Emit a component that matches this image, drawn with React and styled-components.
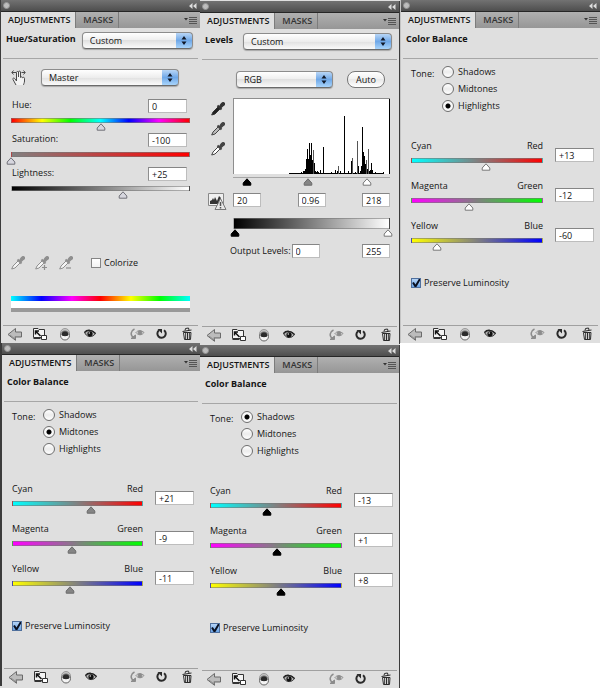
import React, { useId, useState } from 'react';
import styled, { createGlobalStyle } from 'styled-components';

const GlobalStyle = createGlobalStyle`
    *, *::before, *::after {
        box-sizing: border-box;
    }

    body {
        margin: 0;
        background: #ffffff;
        color: #141414;
        font-family: "Open Sans", "Lucida Grande", sans-serif;
        font-size: 9px;
        font-weight: 500;
        line-height: 12px;
    }

    button, input, select {
        margin: 0;
        color: inherit;
        font: inherit;
    }
`;

const svgUrl = (svg) => `url("data:image/svg+xml,${encodeURIComponent(svg)}")`;

const arrows = svgUrl(
    '<svg xmlns="http://www.w3.org/2000/svg" width="16" height="17"><path d="M8 4l2.5 3.5h-5zM8 13l2.5-3.5h-5z" fill="#101828"/></svg>'
);

const tick = svgUrl(
    '<svg xmlns="http://www.w3.org/2000/svg" width="12" height="12"><path d="M3 5.500l2.500 4L10.500 1" fill="none" stroke="#0a1020" stroke-width="2"/></svg>'
);

const thumbImage = (fill, stroke) => svgUrl(
    `<svg xmlns="http://www.w3.org/2000/svg" width="10" height="8"><path d="M5 .8L8.800 5v2.200H1.200V5z" fill="${fill}" stroke="${stroke}" stroke-linejoin="round"/></svg>`
);

const thumbs = {
    black: thumbImage('#000', '#000'),
    gray: thumbImage('#858585', '#6c6c6c'),
    light: thumbImage('#d6d6de', '#707078'),
    white: thumbImage('#fff', '#777'),
};

const Board = styled.main`
    display: flex;
    align-items: stretch;
`;

const Column = styled.div`
    flex: 1 1 0;
    min-width: 0;
    display: flex;
    flex-direction: column;
    gap: ${(p) => p.$gap || '0'};
    padding-top: ${(p) => p.$gap || '0'};
    background: ${(p) => p.$background || '#dfdfdf'};
`;

const Panel = styled.section`
    display: flex;
    flex-direction: column;
    background: #dfdfdf;
    border-left: ${(p) => p.$left || 'none'};
    border-right: ${(p) => p.$right || 'none'};
`;

const TitleBar = styled.div`
    display: flex;
    align-items: center;
    justify-content: space-between;
    height: 12px;
    padding: 0 3px 0 2px;
    background: linear-gradient(#727272, #4e4e4e);
    border-bottom: 1px solid #262626;
`;

const PlainButton = styled.button`
    display: flex;
    padding: 0;
    background: none;
    border: none;
`;

const TabBar = styled.div`
    display: flex;
    height: 16px;
    padding-right: 3px;
    background: linear-gradient(#b0b0b0, #969696);
`;

const Tab = styled.button`
    padding: 0 5px 0 7px;
    color: ${(p) => (p.$active ? '#141414' : '#333333')};
    font-weight: 600;
    background: ${(p) => (p.$active ? '#dfdfdf' : 'transparent')};
    border: none;
    border-right: 1px solid #7c7c7c;
`;

const MenuButton = styled(PlainButton)`
    align-items: center;
    margin-left: auto;
`;

const Header = styled.header`
    display: flex;
    align-items: center;
    gap: 6px;
    height: 31px;
    margin: 0 2px;
    padding: 4px 5px 9px 3px;
    border-bottom: 1px solid #a6a6a6;
`;

const Title = styled.h2`
    min-width: 32px;
    margin: 0;
    padding-bottom: 4px;
    font-size: 9px;
    font-weight: 700;
    white-space: nowrap;
`;

const Content = styled.div`
    display: flex;
    flex-direction: column;
    min-height: 266px;
    padding: ${(p) => p.$padding};
`;

const Select = styled.select`
    flex: ${(p) => (p.$width ? 'none' : '1')};
    width: ${(p) => p.$width || 'auto'};
    min-width: 0;
    height: 17px;
    padding: 0 20px 0 7px;
    appearance: none;
    background:
        ${arrows} right center / 16px 17px no-repeat,
        linear-gradient(#b9d6f6, #6fa8e8 50%, #a8d4fb) right / 16px 100% no-repeat,
        linear-gradient(#ffffff, #ededed 50%, #e0e0e0 50%, #fafafa);
    border: 1px solid #8c8c8c;
    border-bottom-color: #6a6a6a;
    border-radius: 4px;
    box-shadow: 0 1px 1px rgba(0, 0, 0, 0.25);
`;

const AutoButton = styled.button`
    width: 38px;
    height: 17px;
    padding: 0;
    background: linear-gradient(#ffffff, #f0f0f0 50%, #e9e9e9 50%, #ffffff);
    border: 1px solid #777777;
    border-radius: 8px;
`;

const ToolRow = styled.div`
    display: flex;
    align-items: center;
    gap: 14px;
    padding-right: 11px;
`;

const Field = styled.input`
    width: ${(p) => p.$width || '39px'};
    height: 14px;
    padding: 0 3px;
    background: #ffffff;
    border: 1px solid #bdbdbd;
    border-top-color: #858585;
    border-left-color: #8e8e8e;
    border-radius: 0;
`;

const Bar = styled.div`
    height: ${(p) => p.$height || '5px'};
    background: ${(p) => p.$fill};
    border: 1px solid rgba(120, 120, 120, 0.6);
`;

const Range = styled.input`
    display: block;
    grid-area: 1 / 1;
    width: 100%;
    height: 8px;
    appearance: none;
    background: none;
    pointer-events: none;

    &::-webkit-slider-thumb {
        width: 10px;
        height: 8px;
        appearance: none;
        background: ${(p) => thumbs[p.$thumb]};
        pointer-events: auto;
    }
`;

// Half a thumb wider on each side, so the tip reaches both ends of the bar
const Rail = styled.div`
    display: grid;
    margin: 0 -5px;
`;

const HueSliders = styled.div`
    display: flex;
    flex-direction: column;
    gap: 2px;
    margin: 13px 0 57px;
`;

const LabelLine = styled.div`
    display: flex;
    justify-content: space-between;
    padding: 0 3px 0 1px;
    margin-bottom: 5px;
`;

const CheckLine = styled.label`
    display: flex;
    align-items: center;
    gap: 3px;
`;

const CheckBox = styled.input`
    width: 10px;
    height: 10px;
    appearance: none;
    background: linear-gradient(#ffffff, #f2f2f2);
    border: 1px solid #858585;

    &:checked {
        background: ${tick} center no-repeat, linear-gradient(#b5d4f7, #6aa5e8);
        border-color: #4f6f9c;
    }
`;

const Droppers = styled.div`
    display: flex;
    align-items: center;
    gap: 10px;

    ${CheckLine} {
        margin-left: 8px;
    }
`;

const Spectrum = styled.div`
    height: 16px;
    margin-top: 26px;
    background: #ffffff;
    border-bottom: 4px solid #999999;

    &::before {
        content: "";
        display: block;
        height: 5px;
        background: linear-gradient(90deg, #00ffff, #0000ff 17%, #ff00ff 34%, #ff0000 50%, #ffff00 67%, #00ff00 83%, #00ffff);
    }
`;

const LevelsTop = styled.div`
    display: flex;
    justify-content: space-between;
    padding: 0 5px 0 28px;
    margin-bottom: 10px;
`;

const LevelsGrid = styled.div`
    display: grid;
    grid-template-columns: 19px minmax(0, 1fr);
    column-gap: 6px;
`;

const DropperColumn = styled.div`
    display: flex;
    flex-direction: column;
    align-items: center;
    gap: 6px;
    padding-top: 4px;
`;

const Histogram = styled.svg`
    display: block;
    width: 100%;
    height: 76px;
    margin-bottom: 3px;
    background: #ffffff;
    border-top: 1px solid #8e8e8e;
    border-left: 1px solid #8e8e8e;
`;

const InputLevels = styled.div`
    border-top: 1px solid #a6a6a6;
`;

const FieldRow = styled.div`
    display: flex;
    justify-content: space-between;
    align-items: flex-start;
    margin: ${(p) => p.$margin || '0'};
`;

const OutputRow = styled.div`
    display: flex;
    align-items: center;
    gap: 1px;
    margin-top: 7px;
    padding-left: 22px;

    ${Field}:last-child {
        margin-left: auto;
    }
`;

const ToneGroup = styled.div`
    display: grid;
    grid-template-columns: 31px 1fr;
    margin-bottom: 28px;
`;

const ToneLabel = styled.div`
    padding-top: 2px;
`;

const ToneList = styled.div`
    display: flex;
    flex-direction: column;
    gap: 5px;
`;

const RadioLine = styled.label`
    display: flex;
    align-items: center;
    gap: 4px;
`;

const Radio = styled.input`
    width: 12px;
    height: 12px;
    appearance: none;
    background: linear-gradient(#ffffff, #ececec 50%, #ffffff);
    border: 1px solid #6e6e6e;
    border-radius: 50%;

    &:checked {
        background: radial-gradient(circle, #000000 2px, transparent 3px), #f8f8f8;
    }
`;

const BalanceRow = styled.div`
    display: grid;
    grid-template-columns: minmax(0, 1fr) 39px;
    align-items: start;
    column-gap: 12px;
    margin-bottom: 9px;

    ${Field} {
        margin-top: 8px;
    }
`;

const BalanceEnds = styled.label`
    display: flex;
    justify-content: space-between;
    margin-bottom: 6px;
`;

const Preserve = styled(CheckLine)`
    margin-top: 17px;
`;

const Footer = styled.footer`
    display: flex;
    align-items: center;
    gap: 9px;
    height: 18px;
    margin: 0 2px;
    padding: 0 3px 2px 4px;
    border-top: 1px solid #a0a0a0;
`;

const FooterButton = styled(PlainButton)`
    margin-left: ${(p) => (p.$push ? 'auto' : '0')};
`;

const BackIcon = () => (
    <svg width="16" height="14" viewBox="0 0 16 14">
        <path d="M1 7.500L8.500 1.500V5H14.500V10H8.500V13.300Z" fill="#bcbcbc" stroke="#6b6b6b" strokeLinejoin="round" />
        <path d="M3 8l5 4V9.500h6" fill="none" stroke="#8c8c8c" />
    </svg>
);

const ExpandIcon = () => (
    <svg width="16" height="14" viewBox="0 0 16 14">
        <path d="M1.500 1.500H6l1 1h5.500v8h-11z" fill="#f4f4f4" stroke="#333" />
        <path d="M3.500 7.500V4H7M4 4.500l4.500 4.500" fill="none" stroke="#111" strokeWidth="1.500" />
        <path d="M9.500 8.500h5v4h-5z" fill="#fff" stroke="#333" />
        <path d="M1.500 11.500h7" stroke="#333" />
    </svg>
);

const ClipIcon = () => (
    <svg width="16" height="14" viewBox="0 0 16 14">
        <circle cx="8" cy="6" r="4.500" fill="#c4c4c4" stroke="#9a9a9a" />
        <circle cx="8" cy="8.500" r="4.500" fill="#f3f3f3" stroke="#666" />
        <path d="M4.500 8a3.500 3.800 0 0 1 7 0c-1 1.600-6 1.600-7 0z" fill="#2b2b2b" />
    </svg>
);

const EyeIcon = () => (
    <svg width="16" height="14" viewBox="0 0 16 14">
        <path d="M2.500 5.500C5 2.500 10 2.500 13.500 6.500C11 10.500 5.500 10.500 3.500 7Z" fill="#b5b5b5" stroke="#333" />
        <path d="M2.500 5.500C5 2.500 10 2.500 13.500 6.500" fill="none" stroke="#222" strokeWidth="1.500" />
        <circle cx="8" cy="6.800" r="2.600" fill="#111" />
        <circle cx="7.300" cy="6" r=".8" fill="#ddd" />
    </svg>
);

const PreviousIcon = () => (
    <svg width="16" height="14" viewBox="0 0 16 14" fill="none" stroke="#8c8c8c">
        <path d="M5.500 2C1.500 4 1 8 4.500 10.500" strokeWidth="1.500" />
        <path d="M2 11.500h4.500V8z" fill="#8c8c8c" />
        <path d="M7 5.500C9 3 12 3 15 5.500C13 8.500 9 8.500 7 5.500Z" />
        <circle cx="11" cy="5.500" r="1.800" fill="#8c8c8c" />
    </svg>
);

const ResetIcon = () => (
    <svg width="16" height="14" viewBox="0 0 16 14">
        <path d="M10 3.200A4.200 4.200 0 1 1 5 3.300" fill="none" stroke="#2a2a2a" strokeWidth="2" />
        <path d="M3.500 2H8v4.500z" fill="#2a2a2a" />
    </svg>
);

const TrashIcon = () => (
    <svg width="16" height="14" viewBox="0 0 16 14" fill="none" stroke="#2a2a2a">
        <path d="M3.500 4.500l9-1.500M6 3.500l.5-2 3-.5.500 2" />
        <path d="M4.500 5.500h7.500l-.5 7H5.500z" fill="#f2f2f2" />
        <path d="M6.700 6v6M8.500 6v6M10.300 6v6" />
    </svg>
);

const HandIcon = () => (
    <svg width="16" height="17" viewBox="0 0 16 17" fill="none" stroke="#4a4a4a">
        <path d="M5 16L2 10.500c-.8-1.500 1-1.800 1.800-.8L5.500 12V3.500c0-1.400 2-1.400 2 0V8V3c0-1.200 2-1.200 2 0v5.500c.3-1 2-.8 2 .3c.4-.8 2-.6 2 .5V12c0 2-1 3-1 4" fill="#f3f3f3" />
        <path d="M1 3.500h4M10.500 3.500h3.500M2.500 1.500L.8 3.500l1.700 2M12.500 1.500l1.700 2-1.700 2" />
    </svg>
);

const WarningIcon = () => (
    <svg width="19" height="18" viewBox="0 0 19 18">
        <path d="M.5.5h15v12h-15z" fill="#f0f0f0" stroke="#888" />
        <path d="M2 11V8l2-1 1-2 1 2 1-3 1 2 1 2 2-5 2 2v6z" fill="#333" />
        <path d="M12.500 5.500l5.500 11H7z" fill="#e6e6e6" stroke="#777" strokeLinejoin="round" />
        <path d="M12.500 9v4M12.500 14v1.500" stroke="#555" strokeWidth="1.500" />
    </svg>
);

function DropperIcon({ fill = '#f4f4f4', color = '#777', sign }) {
    return (
        <svg width="14" height="14" viewBox="0 0 14 14">
            <path d="M8 4L2 10l-1.300 3L4 12l6-6" fill={fill} stroke={color} />
            <path d="M6.500 3.500L10.500 7.500" stroke={color} strokeWidth="2" />
            <path d="M8.500 5L10 2.500Q11.500 0 13 1T11.500 4L9.500 6Z" fill={color} stroke={color} strokeWidth="1.500" />
            {sign && <path d={sign === 'plus' ? 'M7 11.500h5M9.500 9v5' : 'M7 12h5'} stroke={color} strokeWidth="1.200" />}
        </svg>
    );
}

const signed = (value) => (value > 0 ? `+${value}` : `${value}`);

// x, height and shade of each bin that stands above the base line
const bins = [
    [67, 2], [69, 3], [70, 3], [71, 5], [72, 15], [73, 25], [74, 15], [75, 31], [76, 19], [77, 31], [78, 14],
    [79, 24, '#555'], [80, 11], [81, 3], [82, 2], [83, 3], [84, 2], [86, 4], [89, 27], [97, 2], [101, 4], [103, 3],
    [104, 8, '#555'], [106, 3], [110, 58], [114, 3], [117, 13], [118, 16, '#555'], [121, 2],
    [123, 33, '#555'], [124, 8], [126, 3], [127, 8], [128, 47], [129, 22], [130, 18], [131, 10],
    [132, 14, '#555'], [133, 5], [134, 25, '#555'], [135, 3], [136, 4], [137, 11], [138, 4], [141, 2], [149, 2],
];

function AdjustmentPanel({ title, header, left, right, padding, children }) {
    return (
        <Panel $left={left} $right={right}>
            <TitleBar>
                <PlainButton aria-label="Close">
                    <svg width="7" height="7"><circle cx="3.500" cy="3.500" r="3" fill="#bdbdbd" stroke="#929292" /></svg>
                </PlainButton>
                <PlainButton aria-label="Collapse">
                    <svg width="8" height="6"><path d="M3.500 0v6L0 3zM7.500 0v6L4 3z" fill="#dcdcdc" /></svg>
                </PlainButton>
            </TitleBar>
            <TabBar>
                <Tab $active>ADJUSTMENTS</Tab>
                <Tab>MASKS</Tab>
                <MenuButton aria-label="Panel menu">
                    <svg width="13" height="8">
                        <path d="M0 2h4L2 4.500z" fill="#333" />
                        <path d="M5 1.500h8M5 3.500h8M5 5.500h8M5 7.500h8" stroke="#555" />
                    </svg>
                </MenuButton>
            </TabBar>
            <Header>
                <Title>{title}</Title>
                {header}
            </Header>
            <Content $padding={padding}>{children}</Content>
            <Footer>
                <FooterButton aria-label="Back to list"><BackIcon /></FooterButton>
                <FooterButton aria-label="Expanded view"><ExpandIcon /></FooterButton>
                <FooterButton aria-label="Clip to layer"><ClipIcon /></FooterButton>
                <FooterButton aria-label="Toggle visibility"><EyeIcon /></FooterButton>
                <FooterButton $push aria-label="View previous state"><PreviousIcon /></FooterButton>
                <FooterButton aria-label="Reset"><ResetIcon /></FooterButton>
                <FooterButton aria-label="Delete"><TrashIcon /></FooterButton>
            </Footer>
        </Panel>
    );
}

function HueSlider({ label, initial, limit, fill }) {
    const id = useId();
    const [value, setValue] = useState(initial);

    return (
        <div>
            <LabelLine>
                <label htmlFor={id}>{label}</label>
                <Field id={id} value={signed(value)} onChange={(e) => setValue(Number(e.target.value) || 0)} />
            </LabelLine>
            <Bar $fill={fill} />
            <Rail>
                <Range
                    type="range"
                    aria-label={label}
                    min={-limit}
                    max={limit}
                    value={value}
                    onChange={(e) => setValue(Number(e.target.value))}
                    $thumb="light"
                />
            </Rail>
        </div>
    );
}

function BalanceSlider({ from, to, initial, fill, thumb }) {
    const id = useId();
    const [value, setValue] = useState(initial);

    return (
        <BalanceRow>
            <div>
                <BalanceEnds htmlFor={id}>
                    <span>{from}</span>
                    <span>{to}</span>
                </BalanceEnds>
                <Bar $fill={fill} />
                <Rail>
                    <Range
                        type="range"
                        aria-label={`${from} to ${to}`}
                        min={-100}
                        max={100}
                        value={value}
                        onChange={(e) => setValue(Number(e.target.value))}
                        $thumb={thumb}
                    />
                </Rail>
            </div>
            <Field id={id} value={signed(value)} onChange={(e) => setValue(Number(e.target.value) || 0)} />
        </BalanceRow>
    );
}

function HuePanel() {
    return (
        <AdjustmentPanel
            title="Hue/Saturation"
            header={<Select aria-label="Preset"><option>Custom</option></Select>}
            left="1px solid #3c3c3c"
            padding="10px 10px 0"
        >
            <ToolRow>
                <PlainButton aria-label="On-image adjustment"><HandIcon /></PlainButton>
                <Select aria-label="Color range"><option>Master</option></Select>
            </ToolRow>
            <HueSliders>
                <HueSlider label="Hue:" initial={0} limit={180} fill="linear-gradient(90deg, #f00, #ff0 17%, #0f0 33%, #0ff 50%, #00f 66%, #f0f 83%, #f00)" />
                <HueSlider label="Saturation:" initial={-100} limit={100} fill="linear-gradient(90deg, #808080, #f00)" />
                <HueSlider label="Lightness:" initial={25} limit={100} fill="linear-gradient(90deg, #000, #fff)" />
            </HueSliders>
            <Droppers>
                <PlainButton aria-label="Eyedropper"><DropperIcon color="#8f8f8f" /></PlainButton>
                <PlainButton aria-label="Add to sample"><DropperIcon color="#8f8f8f" sign="plus" /></PlainButton>
                <PlainButton aria-label="Subtract from sample"><DropperIcon color="#8f8f8f" sign="minus" /></PlainButton>
                <CheckLine>
                    <CheckBox type="checkbox" />
                    Colorize
                </CheckLine>
            </Droppers>
            <Spectrum />
        </AdjustmentPanel>
    );
}

function LevelsPanel() {
    return (
        <AdjustmentPanel
            title="Levels"
            header={<Select aria-label="Preset"><option>Custom</option></Select>}
            right="1px solid #3c3c3c"
            padding="11px 9px 0 8px"
        >
            <LevelsTop>
                <Select $width="97px" aria-label="Channel"><option>RGB</option></Select>
                <AutoButton>Auto</AutoButton>
            </LevelsTop>
            <LevelsGrid>
                <DropperColumn>
                    <PlainButton aria-label="Set black point"><DropperIcon fill="#222" color="#333" /></PlainButton>
                    <PlainButton aria-label="Set gray point"><DropperIcon fill="#bbb" color="#444" /></PlainButton>
                    <PlainButton aria-label="Set white point"><DropperIcon fill="#fff" color="#444" /></PlainButton>
                </DropperColumn>
                <div>
                    <Histogram viewBox="0 0 156 75" preserveAspectRatio="none" shapeRendering="crispEdges">
                        <rect x="55" y="74" width="95" height="1" />
                        {bins.map(([x, height, shade]) => (
                            <rect key={x} x={x} y={75 - height} width="1" height={height} fill={shade || '#000'} />
                        ))}
                        <rect x="155" y="0" width="1" height="75" />
                    </Histogram>
                    <InputLevels>
                        <Rail>
                            <Range type="range" aria-label="Shadow input" min={0} max={255} defaultValue={22} $thumb="black" />
                            <Range type="range" aria-label="Midtone input" min={0} max={255} defaultValue={122} $thumb="gray" />
                            <Range type="range" aria-label="Highlight input" min={0} max={255} defaultValue={217} $thumb="white" />
                        </Rail>
                    </InputLevels>
                </div>
                <FieldRow $margin="7px 0 0">
                    <WarningIcon />
                </FieldRow>
                <div>
                    <FieldRow $margin="7px 0 11px">
                        <Field $width="28px" aria-label="Shadow level" defaultValue="20" />
                        <Field $width="28px" aria-label="Midtone level" defaultValue="0.96" />
                        <Field $width="28px" aria-label="Highlight level" defaultValue="218" />
                    </FieldRow>
                    <Bar $height="11px" $fill="linear-gradient(90deg, #000, #fff)" />
                    <Rail>
                        <Range type="range" aria-label="Output shadow" min={0} max={255} defaultValue={3} $thumb="black" />
                        <Range type="range" aria-label="Output highlight" min={0} max={255} defaultValue={252} $thumb="white" />
                    </Rail>
                </div>
            </LevelsGrid>
            <OutputRow>
                <label htmlFor="output-low">Output Levels:</label>
                <Field id="output-low" $width="28px" defaultValue="0" />
                <Field $width="28px" aria-label="Output highlight level" defaultValue="255" />
            </OutputRow>
        </AdjustmentPanel>
    );
}

function BalancePanel({ tone, values, thumb, left, right }) {
    const name = useId();

    return (
        <AdjustmentPanel title="Color Balance" left={left} right={right} padding="7px 6px 0 10px">
            <ToneGroup role="radiogroup" aria-label="Tone">
                <ToneLabel>Tone:</ToneLabel>
                <ToneList>
                    {['Shadows', 'Midtones', 'Highlights'].map((item) => (
                        <RadioLine key={item}>
                            <Radio type="radio" name={name} defaultChecked={item === tone} />
                            {item}
                        </RadioLine>
                    ))}
                </ToneList>
            </ToneGroup>
            <BalanceSlider from="Cyan" to="Red" initial={values[0]} thumb={thumb} fill="linear-gradient(90deg, #0ff, #808080, #f00)" />
            <BalanceSlider from="Magenta" to="Green" initial={values[1]} thumb={thumb} fill="linear-gradient(90deg, #f0f, #808080, #0f0)" />
            <BalanceSlider from="Yellow" to="Blue" initial={values[2]} thumb={thumb} fill="linear-gradient(90deg, #ff0, #808080, #00f)" />
            <Preserve>
                <CheckBox type="checkbox" defaultChecked />
                Preserve Luminosity
            </Preserve>
        </AdjustmentPanel>
    );
}

export default function App() {
    return (
        <>
            <GlobalStyle />
            <Board>
                <Column>
                    <HuePanel />
                    <BalancePanel tone="Midtones" values={[21, -9, -11]} thumb="gray" left="2px solid #3c3c3c" />
                </Column>
                <Column $gap="1px">
                    <LevelsPanel />
                    <BalancePanel tone="Shadows" values={[-13, 1, 8]} thumb="black" right="1px solid #3c3c3c" />
                </Column>
                <Column $background="#ffffff">
                    <BalancePanel tone="Highlights" values={[13, -12, -60]} thumb="white" left="1px solid #c4c4c4" />
                </Column>
            </Board>
        </>
    );
}
